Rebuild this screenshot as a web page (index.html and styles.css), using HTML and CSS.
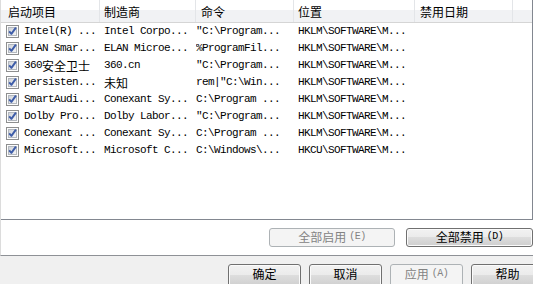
FILE: index.html
```html
<!DOCTYPE html>
<html lang="zh-CN">
<head>
<meta charset="utf-8">
<title>启动</title>
<link rel="stylesheet" href="styles.css">
</head>
<body>
<svg class="defs" width="0" height="0" aria-hidden="true">
  <defs>
    <linearGradient id="cbfill" x1="0" y1="0" x2="1" y2="1">
      <stop offset="0" stop-color="#cdd1d7"/>
      <stop offset="1" stop-color="#f7f7f7"/>
    </linearGradient>
    <symbol id="cb" viewBox="0 0 13 13">
      <rect x="0.5" y="0.5" width="12" height="12" fill="#fdfdfd" stroke="#8e8f8f"/>
      <rect x="2.5" y="2.5" width="8" height="8" fill="url(#cbfill)" stroke="#b3b8bf"/>
      <path d="M3.2 6.4 L5.4 8.9 L9.9 2.6" fill="none" stroke="#3d5ca8" stroke-width="1.9" stroke-linejoin="round"/>
    </symbol>
  </defs>
</svg>
<div class="panel">
  <div class="list">
    <div class="head">
      <div class="hc c1">启动项目</div>
      <div class="hc c2">制造商</div>
      <div class="hc c3">命令</div>
      <div class="hc c4">位置</div>
      <div class="hc c5">禁用日期</div>
      <div class="hc c6"></div>
    </div>
    <div class="rows">
      <div class="row">
        <div class="cell c1"><svg class="cb"><use href="#cb"/></svg>Intel(R) ...</div>
        <div class="cell c2">Intel Corpo...</div>
        <div class="cell c3">"C:\Program...</div>
        <div class="cell c4">HKLM\SOFTWARE\M...</div>
        <div class="cell c5"></div><div class="cell c6"></div>
      </div>
      <div class="row">
        <div class="cell c1"><svg class="cb"><use href="#cb"/></svg>ELAN Smar...</div>
        <div class="cell c2">ELAN Microe...</div>
        <div class="cell c3">%ProgramFil...</div>
        <div class="cell c4">HKLM\SOFTWARE\M...</div>
        <div class="cell c5"></div><div class="cell c6"></div>
      </div>
      <div class="row">
        <div class="cell c1"><svg class="cb"><use href="#cb"/></svg>360<span class="zh">安全卫士</span></div>
        <div class="cell c2">360.cn</div>
        <div class="cell c3">"C:\Program...</div>
        <div class="cell c4">HKLM\SOFTWARE\M...</div>
        <div class="cell c5"></div><div class="cell c6"></div>
      </div>
      <div class="row">
        <div class="cell c1"><svg class="cb"><use href="#cb"/></svg>persisten...</div>
        <div class="cell c2"><span class="zh">未知</span></div>
        <div class="cell c3">rem|"C:\Win...</div>
        <div class="cell c4">HKLM\SOFTWARE\M...</div>
        <div class="cell c5"></div><div class="cell c6"></div>
      </div>
      <div class="row">
        <div class="cell c1"><svg class="cb"><use href="#cb"/></svg>SmartAudi...</div>
        <div class="cell c2">Conexant Sy...</div>
        <div class="cell c3">C:\Program ...</div>
        <div class="cell c4">HKLM\SOFTWARE\M...</div>
        <div class="cell c5"></div><div class="cell c6"></div>
      </div>
      <div class="row">
        <div class="cell c1"><svg class="cb"><use href="#cb"/></svg>Dolby Pro...</div>
        <div class="cell c2">Dolby Labor...</div>
        <div class="cell c3">"C:\Program...</div>
        <div class="cell c4">HKLM\SOFTWARE\M...</div>
        <div class="cell c5"></div><div class="cell c6"></div>
      </div>
      <div class="row">
        <div class="cell c1"><svg class="cb"><use href="#cb"/></svg>Conexant ...</div>
        <div class="cell c2">Conexant Sy...</div>
        <div class="cell c3">C:\Program ...</div>
        <div class="cell c4">HKLM\SOFTWARE\M...</div>
        <div class="cell c5"></div><div class="cell c6"></div>
      </div>
      <div class="row">
        <div class="cell c1"><svg class="cb"><use href="#cb"/></svg>Microsoft...</div>
        <div class="cell c2">Microsoft C...</div>
        <div class="cell c3">C:\Windows\...</div>
        <div class="cell c4">HKCU\SOFTWARE\M...</div>
        <div class="cell c5"></div><div class="cell c6"></div>
      </div>
    </div>
  </div>
  <div class="actions">
    <button class="btn wide1" disabled>全部启用 <span class="acc">(E)</span></button>
    <button class="btn wide2">全部禁用 <span class="acc">(D)</span></button>
  </div>
</div>
<div class="footer">
  <button class="btn foot">确定</button>
  <button class="btn foot">取消</button>
  <button class="btn foot" disabled>应用 <span class="acc">(A)</span></button>
  <button class="btn foot">帮助</button>
</div>
</body>
</html>
```
FILE: styles.css
```css
html, body {
  margin: 0;
  padding: 0;
}
body {
  width: 533px;
  height: 284px;
  overflow: hidden;
  background: #f0f0f0;
  font-family: "Noto Sans CJK SC", "Liberation Sans", sans-serif;
  color: #000;
}
.defs {
  position: absolute;
  width: 0;
  height: 0;
}
.panel {
  background: #fff;
  height: 255px;
  border-left: 1px solid #dcdcdc;
  border-bottom: 1px solid #8e9196;
  display: flex;
  flex-direction: column;
}
.list {
  height: 219px;
  border-right: 1px solid #828790;
  border-bottom: 1px solid #828790;
  overflow: hidden;
}
.head, .row {
  display: grid;
  grid-template-columns: 99px 96px 98px 121px 98px 1fr;
}
.head {
  height: 22px;
  border-bottom: 1px solid #d5d5d5;
  background: linear-gradient(#ffffff 0%, #ffffff 45%, #f1f2f4 46%, #f1f2f4 100%);
}
.hc {
  box-sizing: border-box;
  height: 22px;
  border-right: 1px solid #e3e5e8;
  font-size: 12px;
  line-height: 22px;
  padding-top: 1px;
  padding-left: 4px;
  white-space: nowrap;
  overflow: hidden;
}
.hc.c1 { padding-left: 7px; }
.hc.c3 { padding-left: 5px; }
.hc.c5 { padding-left: 5px; }
.hc.c6 { border-right: none; }
.row {
  height: 17px;
}
.cell {
  font-family: "Liberation Mono", "Noto Sans CJK SC", monospace;
  font-size: 11px;
  letter-spacing: -0.6px;
  line-height: 17px;
  white-space: nowrap;
  overflow: hidden;
  padding-left: 4px;
}
.cell.c1 {
  display: flex;
  align-items: center;
  padding-left: 5px;
}
.cell.c3 { padding-left: 0; }
.cb {
  width: 13px;
  height: 13px;
  flex: 0 0 13px;
  margin-right: 5px;
}
.zh {
  font-family: "Noto Sans CJK SC", sans-serif;
  font-size: 12px;
  letter-spacing: 0;
}
.actions {
  display: flex;
  justify-content: flex-end;
  gap: 11px;
  margin-top: 8px;
}
.btn {
  box-sizing: border-box;
  margin: 0;
  padding: 0;
  border: 1px solid #707070;
  border-radius: 3px;
  background: linear-gradient(#f2f2f2 0%, #ebebeb 48%, #dddddd 50%, #cfcfcf 100%);
  box-shadow: inset 0 0 0 1px #fbfbfb;
  font-family: "Noto Sans CJK SC", sans-serif;
  font-size: 12px;
  line-height: 15px;
  color: #000;
  display: flex;
  justify-content: center;
  align-items: flex-start;
  white-space: nowrap;
  flex-shrink: 0;
}
.btn:disabled {
  border-color: #adb2b5;
  background: #f4f4f4;
  box-shadow: none;
  color: #838383;
}
.acc {
  font-family: "Liberation Mono", monospace;
  font-size: 10px;
  margin-left: 3px;
  letter-spacing: -0.5px;
}
.wide1 { width: 126px; height: 19px; }
.wide2 { width: 127px; height: 19px; }
.footer {
  display: flex;
  gap: 8px;
  padding: 8px 0 0 228px;
  overflow: hidden;
}
.foot {
  width: 73px;
  height: 23px;
  padding-top: 1px;
}
```
